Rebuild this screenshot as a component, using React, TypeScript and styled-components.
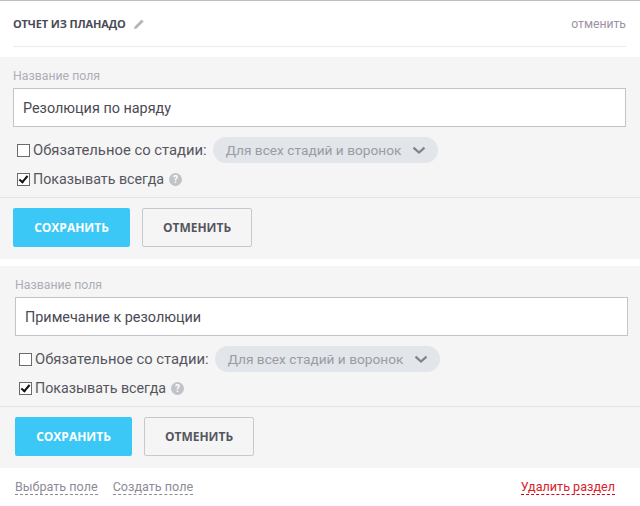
import React from "react";
import styled, { createGlobalStyle } from "styled-components";

const GlobalStyle = createGlobalStyle`
  html, body {
    margin: 0;
    padding: 0;
    background: #fff;
    font-family: Roboto, "Liberation Sans", sans-serif;
  }
`;

const FieldForm = ({ value, shift }: { value: string; shift: number }) => (
  <Panel>
    <PanelBody $shift={shift}>
      <FieldLabel>Название поля</FieldLabel>
      <FieldInput defaultValue={value} />
      <OptionRow>
        <Check type="checkbox" />
        <OptionText>Обязательное со стадии:</OptionText>
        <StagePill>
          Для всех стадий и воронок
          <svg width="14" height="9" viewBox="0 0 14 9">
            <path d="M1.5 1.6 7 6.6 12.5 1.6" fill="none" stroke="#7f838c" strokeWidth="2.2" />
          </svg>
        </StagePill>
      </OptionRow>
      <SecondRow>
        <Check type="checkbox" defaultChecked />
        <AlwaysText>Показывать всегда</AlwaysText>
        <HelpBadge>?</HelpBadge>
      </SecondRow>
    </PanelBody>
    <PanelActions $shift={shift}>
      <SaveButton>СОХРАНИТЬ</SaveButton>
      <CancelButton>ОТМЕНИТЬ</CancelButton>
    </PanelActions>
  </Panel>
);

const App = () => (
  <Page>
    <GlobalStyle />
    <Header>
      <TitleBox>
        <Title>ОТЧЕТ ИЗ ПЛАНАДО</Title>
        <svg width="12" height="12" viewBox="0 0 12 12">
          <path d="M1 11 1.6 8.4 8.6 1.4 10.6 3.4 3.6 10.4Z" fill="#b5b5b5" />
        </svg>
      </TitleBox>
      <HeaderLink>отменить</HeaderLink>
    </Header>
    <Forms>
      <FieldForm value="Резолюция по наряду" shift={13} />
      <FieldForm value="Примечание к резолюции" shift={15} />
    </Forms>
    <Footer>
      <FooterLinks>
        <DashedLink>Выбрать поле</DashedLink>
        <DashedLink>Создать поле</DashedLink>
      </FooterLinks>
      <DangerLink>Удалить раздел</DangerLink>
    </Footer>
  </Page>
);

export default App;

const Page = styled.div`
  width: 640px;
  height: 506px;
  overflow: hidden;
  border-top: 1px solid #bdbdbd;
  box-sizing: border-box;
`;

const Header = styled.div`
  display: flex;
  justify-content: space-between;
  align-items: center;
  height: 45px;
  margin: 0 14px 0 13px;
  border-bottom: 1px solid #ececec;
`;

const TitleBox = styled.div`
  display: flex;
  align-items: center;
  gap: 7px;
`;

const Title = styled.span`
  font-family: "Open Sans", sans-serif;
  font-weight: 700;
  font-size: 11px;
  letter-spacing: -0.13px;
  color: #4a4a55;
`;

const HeaderLink = styled.span`
  font-size: 12.2px;
  color: #9c92a6;
`;

const Forms = styled.div`
  display: flex;
  flex-direction: column;
  gap: 7px;
  margin-top: 10px;
`;

const Panel = styled.div`
  background: #f5f5f5;
  height: 202px;
`;

const PanelBody = styled.div<{ $shift: number }>`
  height: 141px;
  padding: 12px 0 0 ${(p) => p.$shift}px;
  box-sizing: border-box;
  border-bottom: 1px solid #e3e3e3;
`;

const FieldLabel = styled.div`
  font-size: 12.3px;
  line-height: 14px;
  color: #adadb5;
  margin-bottom: 5px;
`;

const FieldInput = styled.input`
  display: block;
  width: 613px;
  height: 39px;
  box-sizing: border-box;
  padding: 1px 9px 0;
  border: 1px solid #c3c3c8;
  background: #fff;
  font-family: Roboto, sans-serif;
  font-size: 14.4px;
  color: #4a4a54;
  outline: none;
`;

const OptionRow = styled.div`
  display: flex;
  align-items: center;
  height: 26px;
  margin: 10px 0 0 4px;
`;

const SecondRow = styled(OptionRow)`
  height: 18px;
  margin-top: 7px;
`;

const Check = styled.input`
  appearance: none;
  position: relative;
  width: 13px;
  height: 13px;
  box-sizing: border-box;
  margin: 0 3px 0 0;
  border: 1px solid #6b6b6b;
  background: #fff;

  &:checked::after {
    content: "";
    position: absolute;
    left: 3px;
    top: 0;
    width: 3px;
    height: 7px;
    border: solid #111;
    border-width: 0 2px 2px 0;
    transform: rotate(40deg);
  }
`;

const OptionText = styled.span`
  font-size: 14.8px;
  color: #55555f;
`;

const AlwaysText = styled(OptionText)`
  font-size: 14.25px;
`;

const StagePill = styled.div`
  display: flex;
  align-items: center;
  justify-content: space-between;
  width: 225px;
  height: 26px;
  box-sizing: border-box;
  margin-left: 6px;
  padding: 0 12px 0 13px;
  border-radius: 13px;
  background: #e2e5ea;
  font-size: 13.7px;
  color: #9a9ca3;
`;

const HelpBadge = styled.span`
  display: flex;
  align-items: center;
  justify-content: center;
  width: 13px;
  height: 13px;
  margin-left: 5px;
  border-radius: 50%;
  background: #c0c3c8;
  color: #fff;
  font-size: 10px;
  font-weight: 700;
`;

const PanelActions = styled.div<{ $shift: number }>`
  display: flex;
  gap: 12px;
  padding: 10px 0 0 ${(p) => p.$shift}px;
`;

const SaveButton = styled.button`
  width: 117px;
  height: 39px;
  border: 0;
  border-radius: 2px;
  background: #3bc8f7;
  color: #fff;
  font-family: "Open Sans", sans-serif;
  font-size: 12px;
  font-weight: 700;
`;

const CancelButton = styled.button`
  width: 110px;
  height: 39px;
  border: 1px solid #c6c9d0;
  border-radius: 2px;
  background: #f5f5f5;
  color: #55555f;
  font-family: "Open Sans", sans-serif;
  font-size: 12px;
  font-weight: 700;
`;

const Footer = styled.div`
  display: flex;
  justify-content: space-between;
  align-items: flex-start;
  padding: 12px 25px 0 15px;
`;

const FooterLinks = styled.div`
  display: flex;
  gap: 15px;
`;

const DashedLink = styled.span`
  font-size: 12.6px;
  line-height: 14px;
  color: #8f8a9a;
  border-bottom: 1px dashed #8f8a9a;
`;

const DangerLink = styled(DashedLink)`
  color: #d8232a;
  border-bottom-color: #d0021b;
`;
